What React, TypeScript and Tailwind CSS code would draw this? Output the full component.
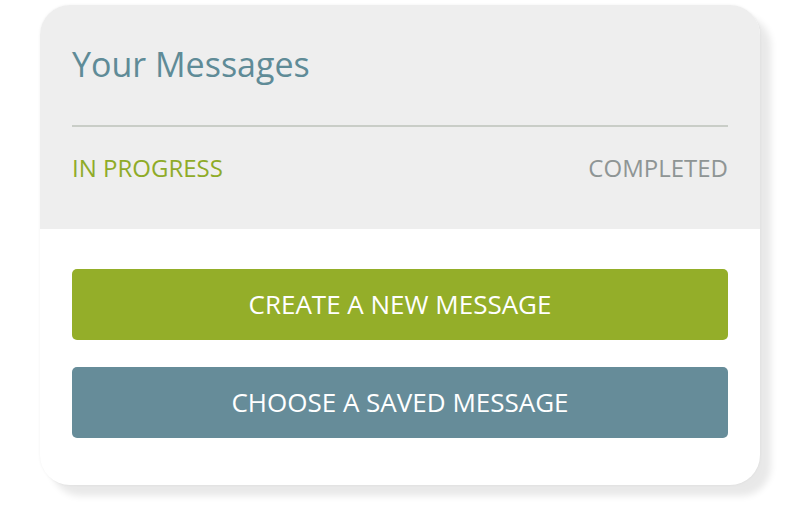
export default function App() {
  return (
    <div
      className="w-[790px] h-[513px] bg-white pl-[40px] pt-[5px]"
      style={{ fontFamily: '"Open Sans", "Noto Sans", sans-serif' }}
    >
      <div className="w-[720px] h-[480px] rounded-[30px] overflow-hidden bg-white flex flex-col shadow-[11px_11px_7px_rgba(0,0,0,0.09),0_0_3px_rgba(0,0,0,0.06)]">
        <div className="h-[224px] bg-[#eeeeee] px-[32px] flex flex-col">
          <h1 className="mt-[35px] text-[34px] leading-[48px] text-[#5f8b97] font-normal">Your Messages</h1>
          <div className="mt-[37px] h-[2px] bg-[#c9cdc7]" />
          <div className="mt-[25px] flex justify-between text-[24px] leading-[32px]">
            <span className="text-[#8fab28]">IN PROGRESS</span>
            <span className="text-[#8e9595]">COMPLETED</span>
          </div>
        </div>
        <div className="px-[32px] pt-[40px] flex flex-col gap-[27px]">
          <button className="h-[71px] w-full rounded-[5px] bg-[#94ae29] text-white text-[26px]">
            CREATE A NEW MESSAGE
          </button>
          <button className="h-[71px] w-full rounded-[5px] bg-[#668c99] text-white text-[26px]">
            CHOOSE A SAVED MESSAGE
          </button>
        </div>
      </div>
    </div>
  )
}
